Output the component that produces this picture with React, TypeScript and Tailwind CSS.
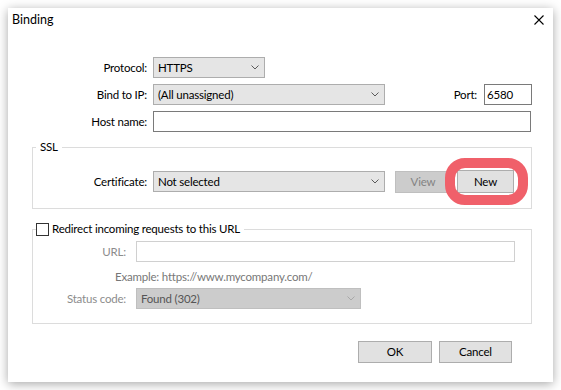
import React from "react";

function Chevron({ color = "#5a5a5a" }: { color?: string }) {
  return (
    <svg width="8" height="5" viewBox="0 0 8 5" className="shrink-0">
      <path d="M0.5 0.5 L4 4 L7.5 0.5" fill="none" stroke={color} strokeWidth="1" />
    </svg>
  );
}

function Select({
  text,
  className,
  disabled,
}: {
  text: string;
  className: string;
  disabled?: boolean;
}) {
  return (
    <div
      className={
        "flex items-center justify-between border pl-[4px] pr-[5px] " +
        (disabled
          ? "bg-[#cccccc] border-[#bfbfbf] text-[#555555] "
          : "bg-[#e5e5e5] border-[#adadad] text-black ") +
        className
      }
    >
      <span className="leading-none">{text}</span>
      <Chevron color={disabled ? "#a8a8a8" : "#5a5a5a"} />
    </div>
  );
}

function Button({
  children,
  className,
  disabled,
}: {
  children: React.ReactNode;
  className: string;
  disabled?: boolean;
}) {
  return (
    <div
      className={
        "flex items-center justify-center border " +
        (disabled
          ? "bg-[#cccccc] border-[#bfbfbf] text-[#838383] "
          : "bg-[#e1e1e1] border-[#adadad] text-black ") +
        className
      }
    >
      {children}
    </div>
  );
}

export default function App() {
  return (
    <div className="w-[561px] h-[390px] bg-white pt-[8px] pl-[8px] font-['Lato',sans-serif] text-[11.5px] tracking-[-0.2px] text-black overflow-hidden">
      <div className="relative w-[545px] h-[374px] bg-white shadow-[0_2px_10px_rgba(0,0,0,0.35)] flex flex-col">
        {/* title bar */}
        <div className="h-[24px] flex items-center justify-between pl-[4px] pr-[9px]">
          <span className="text-[12.5px] tracking-normal">Binding</span>
          <svg width="10" height="10" viewBox="0 0 10 10">
            <path d="M0.5 0.5 L9.5 9.5 M9.5 0.5 L0.5 9.5" stroke="#000" strokeWidth="1.1" />
          </svg>
        </div>

        {/* Protocol */}
        <div className="mt-[25px] flex items-center h-[21px]">
          <div className="w-[139px] text-right">Protocol:</div>
          <Select text="HTTPS" className="ml-[6px] w-[112px] h-[21px]" />
        </div>

        {/* Bind to IP */}
        <div className="mt-[6px] flex items-center h-[21px] w-[524px]">
          <div className="w-[139px] text-right">Bind to IP:</div>
          <Select text="(All unassigned)" className="ml-[6px] w-[232px] h-[21px]" />
          <div className="ml-auto">Port:</div>
          <div className="ml-[7px] w-[48px] h-[21px] border border-[#7a7a7a] flex items-center pl-[2px]">
            6580
          </div>
        </div>

        {/* Host name */}
        <div className="mt-[6px] flex items-center h-[21px]">
          <div className="w-[139px] text-right">Host name:</div>
          <div className="ml-[6px] w-[378px] h-[21px] border border-[#7a7a7a]" />
        </div>

        {/* SSL group */}
        <div className="relative mt-[15px] ml-[24px] w-[500px] h-[62px] border border-[#dcdcdc]">
          <span className="absolute left-[3px] -top-[10px] bg-white px-[4px] leading-[18px]">SSL</span>
          <div className="pt-[22px] flex items-center">
            <div className="w-[114px] text-right">Certificate:</div>
            <Select text="Not selected" className="ml-[6px] w-[232px] h-[21px]" />
            <Button disabled className="ml-[10px] w-[56px] h-[22px]">
              View
            </Button>
            <div className="relative ml-[6px]">
              <Button className="w-[57px] h-[23px]">New</Button>
              <div className="absolute -left-[12px] -top-[12px] w-[83px] h-[47px] border-[10px] border-[#f0606a] rounded-[20px]" />
            </div>
          </div>
        </div>

        {/* Redirect group */}
        <div className="relative mt-[20px] ml-[24px] w-[500px] h-[95px] border border-[#dcdcdc]">
          <div className="absolute left-[3px] -top-[8px] bg-white pr-[4px] flex items-center h-[14px]">
            <div className="w-[13px] h-[13px] border border-[#333333] bg-white" />
            <span className="ml-[3px] leading-none">Redirect incoming requests to this URL</span>
          </div>
          <div className="pt-[11px] flex items-center">
            <div className="w-[93px] text-right text-[#8c8c8c]">URL:</div>
            <div className="ml-[10px] w-[379px] h-[21px] border border-[#d0d0d0]" />
          </div>
          <div className="mt-[6px] pl-[82px] text-[#777777] leading-[17px]">
            Example: https://www.mycompany.com/
          </div>
          <div className="mt-[3px] flex items-center">
            <div className="w-[93px] text-right text-[#8c8c8c]">Status code:</div>
            <Select disabled text="Found (302)" className="ml-[10px] w-[225px] h-[21px]" />
          </div>
        </div>

        {/* buttons */}
        <div className="mt-[17px] flex justify-end pr-[41px] gap-[7px]">
          <Button className="w-[74px] h-[22px]">OK</Button>
          <Button className="w-[73px] h-[22px]">Cancel</Button>
        </div>
      </div>
    </div>
  );
}
